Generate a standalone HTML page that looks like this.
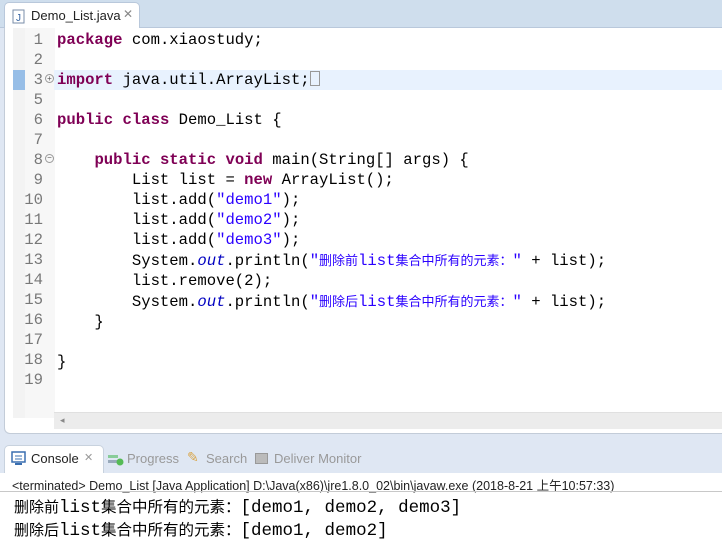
<!DOCTYPE html>
<html><head><meta charset="utf-8"><style>
*{margin:0;padding:0;box-sizing:border-box}
body{width:722px;height:556px;overflow:hidden;background:#dfe7f3;font-family:"Liberation Sans","Noto Sans CJK SC",sans-serif;position:relative}
.abs{position:absolute}
#tabbar{left:0;top:0;width:722px;height:28px;background:#cfdeed;border-bottom:1px solid #b9c8db}
#tab{left:4px;top:2px;width:136px;height:27px;background:#fff;border:1px solid #b9c8db;border-bottom:none;border-radius:5px 5px 0 0;font-size:13px;color:#222}
#editor{left:4px;top:28px;width:722px;height:406px;background:#fff;border-left:1px solid #c3ccd8;border-bottom:1px solid #c3ccd8;border-radius:0 0 0 6px}
#mark{left:8px;top:0;width:13px;height:390px;background:#f3f3f3}
#nums{left:20px;top:0;width:30px;height:390px;background:#f7f7f7}
.code{font-family:"Liberation Mono","Noto Sans CJK SC",monospace;font-size:15.6px;line-height:20px;white-space:pre;color:#000}
.n{color:#787878;text-align:right;width:24px;display:block}
.k{color:#7f0055;font-weight:bold}
.s{color:#2a00ff}
.o{color:#0000c0;font-style:italic}
.cjk{font-family:"Noto Sans CJK SC",sans-serif;font-size:13px}
#hl{left:49px;top:42px;width:680px;height:20px;background:#e8f2fe}
#scroll{left:49px;top:384px;width:680px;height:17px;background:#ececec;border-top:1px solid #e0e0e0}
#console{left:0;top:443px;width:722px;height:113px;background:#fff}
#ctabs{left:0;top:443px;width:722px;height:30px;background:#dfe7f3}
#ctab{left:4px;top:445px;width:100px;height:28px;background:#fff;border-radius:5px 5px 0 0;border:1px solid #c8d2de;border-bottom:none}
.t{font-size:13px;color:#222}
</style></head><body>
<div id="tabbar" class="abs"></div>
<div id="tab" class="abs">
 <svg class="abs" style="left:7px;top:6px" width="13" height="15"><rect x="1" y="1" width="11" height="13" fill="#fff" stroke="#7a8ea8"/><text x="4" y="12" font-size="10" fill="#3060a0" font-family="Liberation Sans">J</text></svg>
 <span class="abs" style="left:26px;top:5px">Demo_List.java</span>
 <span class="abs" style="left:118px;top:4px;color:#888;font-size:12px">✕</span>
</div>
<div id="editor" class="abs">
 <div id="mark" class="abs"></div>
 <div class="abs" style="left:8px;top:42px;width:12px;height:20px;background:#5a9be0;opacity:.6"></div>
 <div id="nums" class="abs"></div>
 <div id="hl" class="abs"></div>
 <div class="abs code" style="left:14px;top:2px"><span class="n">1</span><span class="n">2</span><span class="n">3</span><span class="n">5</span><span class="n">6</span><span class="n">7</span><span class="n">8</span><span class="n">9</span><span class="n">10</span><span class="n">11</span><span class="n">12</span><span class="n">13</span><span class="n">14</span><span class="n">15</span><span class="n">16</span><span class="n">17</span><span class="n">18</span><span class="n">19</span></div>
 <div class="abs" style="left:40px;top:46px;width:9px;height:9px;border:1px solid #999;border-radius:50%;font-size:8px;line-height:7px;text-align:center;color:#555">+</div>
 <div class="abs" style="left:40px;top:126px;width:9px;height:9px;border:1px solid #999;border-radius:50%;font-size:8px;line-height:6px;text-align:center;color:#555">−</div>
 <div class="abs code" style="left:52px;top:2px"><span class="k">package</span> com.xiaostudy;

<span class="k">import</span> java.util.ArrayList;<span style="display:inline-block;width:10px;height:15px;border:1px solid #999;vertical-align:-2px"></span>

<span class="k">public</span> <span class="k">class</span> Demo_List {

    <span class="k">public</span> <span class="k">static</span> <span class="k">void</span> main(String[] args) {
        List list = <span class="k">new</span> ArrayList();
        list.add(<span class="s">"demo1"</span>);
        list.add(<span class="s">"demo2"</span>);
        list.add(<span class="s">"demo3"</span>);
        System.<span class="o">out</span>.println(<span class="s">"<span class="cjk">删除前</span>list<span class="cjk">集合中所有的元素：</span>"</span> + list);
        list.remove(2);
        System.<span class="o">out</span>.println(<span class="s">"<span class="cjk">删除后</span>list<span class="cjk">集合中所有的元素：</span>"</span> + list);
    }

}
</div>
 <div id="scroll" class="abs"><span class="abs" style="left:6px;top:2px;font-size:9px;color:#888">◂</span></div>
</div>
<div id="console" class="abs"></div>
<div id="ctabs" class="abs"></div>
<div id="ctab" class="abs"></div>
<svg class="abs" style="left:11px;top:451px" width="15" height="15"><rect x="1" y="1" width="13" height="10" fill="#fff" stroke="#3a6fb0" stroke-width="1.5"/><line x1="4" y1="5" x2="11" y2="5" stroke="#3a6fb0"/><line x1="4" y1="8" x2="11" y2="8" stroke="#3a6fb0"/><rect x="4" y="12" width="7" height="2" fill="#3a6fb0"/></svg>
<span class="abs t" style="left:31px;top:451px">Console</span>
<span class="abs" style="left:84px;top:451px;color:#999;font-size:11px">✕</span>
<svg class="abs" style="left:108px;top:453px" width="16" height="13"><rect x="0" y="2" width="10" height="3" fill="#8c9"/><rect x="0" y="7" width="10" height="3" fill="#9ab"/><circle cx="12" cy="9" r="3.5" fill="#5b5"/></svg>
<span class="abs t" style="left:127px;top:451px;color:#999">Progress</span>
<span class="abs" style="left:187px;top:449px;color:#d9a64a;font-size:14px">✎</span>
<span class="abs t" style="left:206px;top:451px;color:#999">Search</span>
<div class="abs" style="left:255px;top:453px;width:13px;height:11px;background:#bbb;border:1px solid #999"></div>
<span class="abs t" style="left:274px;top:451px;color:#999">Deliver Monitor</span>
<span class="abs" style="left:12px;top:475px;font-size:12.5px;color:#222;white-space:nowrap">&lt;terminated&gt; Demo_List [Java Application] D:\Java(x86)\jre1.8.0_02\bin\javaw.exe (2018-8-21 上午10:57:33)</span>
<div class="abs" style="left:0;top:491px;width:722px;height:1px;background:#c8c8c8"></div>
<div class="abs code" style="left:14px;top:496px;font-size:17.5px;line-height:21px"><span class="cjk" style="font-size:15px">删除前</span>list<span class="cjk" style="font-size:15.5px">集合中所有的元素：</span>[demo1, demo2, demo3]
<span class="cjk" style="font-size:15px">删除后</span>list<span class="cjk" style="font-size:15.5px">集合中所有的元素：</span>[demo1, demo2]</div>
</body></html>
